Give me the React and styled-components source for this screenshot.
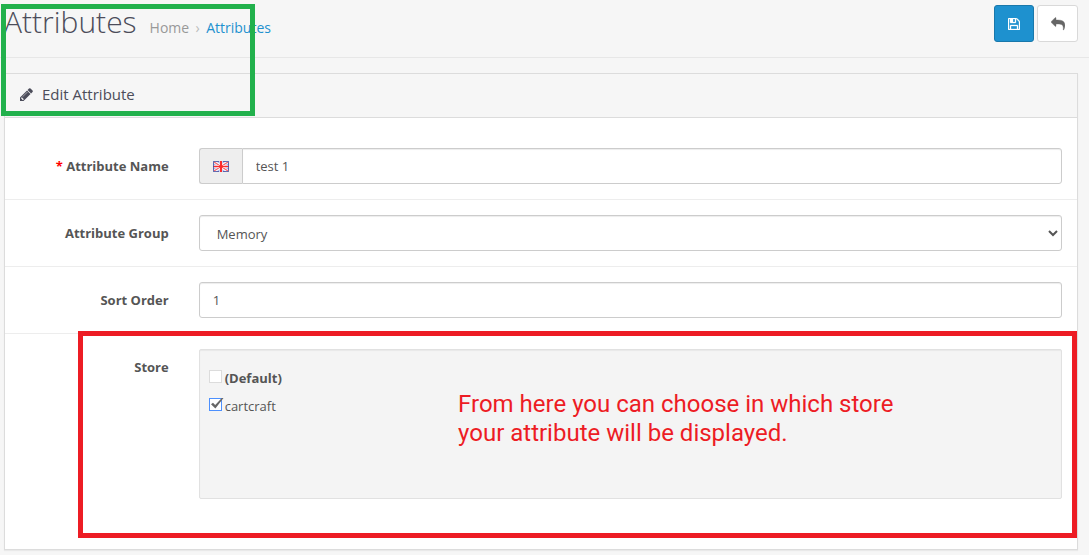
import { useState } from 'react';
import styled, { createGlobalStyle } from 'styled-components';

const BORDER = '#dcdcdc';
const BLUE = '#1e91cf';
const RED = '#ed1c24';
const GREEN = '#22b14c';

function PencilIcon() {
  return (
    <svg width="13" height="13" viewBox="0 0 1536 1536" fill="currentColor" aria-hidden="true">
      <path d="M363 1408l91-91-235-235-91 91v107h128v128h107zm523-928q0-22-22-22-10 0-17 7l-542 542q-7 7-7 17 0 22 22 22 10 0 17-7l542-542q7-7 7-17zm-54-192l416 416-832 832h-416v-416zm683 96q0 53-37 90l-166 166-416-416 166-165q36-38 90-38 53 0 91 38l235 234q37 39 37 91z" />
    </svg>
  );
}

function SaveIcon() {
  return (
    <svg width="12" height="12" viewBox="0 0 1536 1536" fill="currentColor" aria-hidden="true">
      <path
        stroke="currentColor"
        strokeWidth="40"
        d="M384 1408h768v-384h-768v384zm896 0h128v-896q0-14-10-38.500t-20-34.500l-281-281q-10-10-34-20t-39-10v416q0 40-28 68t-68 28h-576q-40 0-68-28t-28-68v-416h-128v1280h128v-416q0-40 28-68t68-28h832q40 0 68 28t28 68v416zm-384-928v-320q0-13-9.500-22.500t-22.500-9.500h-192q-13 0-22.500 9.500t-9.500 22.500v320q0 13 9.500 22.500t22.500 9.500h192q13 0 22.500-9.500t9.500-22.500zm640 32v928q0 40-28 68t-68 28h-1344q-40 0-68-28t-28-68v-1344q0-40 28-68t68-28h928q40 0 88 20t76 48l280 280q28 28 48 76t20 88z"
      />
    </svg>
  );
}

function ReplyIcon() {
  return (
    <svg width="14" height="14" viewBox="0 0 1792 1792" fill="currentColor" aria-hidden="true">
      <path
        transform="translate(1792 0) scale(-1 1)"
        stroke="currentColor"
        strokeWidth="50"
        d="M1792 640q0 26-19 45l-512 512q-19 19-45 19t-45-19-19-45v-256h-224q-98 0-175.500 6t-154 21.500-133 42.500-105.500 69.500-80 101-48.500 138.500-17.500 181q0 55 5 123 0 6 2.500 23.500t2.500 26.500q0 15-8.500 25t-23.500 10q-16 0-28-17-7-9-13-22t-13.500-30-10.500-24q-127-285-127-451 0-199 53-333 162-403 875-403h224v-256q0-26 19-45t45-19 45 19l512 512q19 19 19 45z"
      />
    </svg>
  );
}

function FlagIcon() {
  return (
    <svg width="16" height="11" viewBox="0 0 16 11" role="img" aria-label="English">
      <rect width="16" height="11" fill="#a9b6e8" />
      <path d="M0 0L16 11M16 0L0 11" stroke="#fff" strokeWidth="3" />
      <path d="M1 1L15 10M15 1L1 10" stroke="#f4636b" strokeWidth="1.300" />
      <path d="M8 0V11M0 5.500H16" stroke="#fff" strokeOpacity="0.700" strokeWidth="3" />
      <path d="M8 0V11" stroke="#fb2b2b" strokeWidth="2" />
      <path d="M0 5.500H16" stroke="#fb2b2b" strokeWidth="1.400" />
      <circle cx="8" cy="5.500" r="2" fill="#fb2b2b" />
      <path d="M0.500 0V11M15.500 0V11M1 0.500H6M10 0.500H15M1 10.500H6M10 10.500H15" stroke="#4450a0" strokeOpacity="0.800" />
    </svg>
  );
}

function StoreCheckbox({ id, label, bold, defaultChecked }) {
  const [checked, setChecked] = useState(Boolean(defaultChecked));

  return (
    <CheckLabel htmlFor={id} $bold={bold}>
      <CheckBox>
        <CheckInput
          id={id}
          type="checkbox"
          checked={checked}
          onChange={(e) => setChecked(e.target.checked)}
        />
        {checked && (
          <CheckMark width="15" height="13" viewBox="0 0 15 13" aria-hidden="true">
            <path d="M2 6.200L4 4.800L6.200 7L12.800 0H14.500L6.400 10.600Z" fill="#666" />
          </CheckMark>
        )}
      </CheckBox>
      {label}
    </CheckLabel>
  );
}

function App() {
  return (
    <Page>
      <GlobalStyle />
      <PageHeader>
        <Title>Attributes</Title>
        <Breadcrumb aria-label="Breadcrumb">
          <Crumb href="#home">Home</Crumb>
          <Separator>›</Separator>
          <Crumb href="#attributes" $active>
            Attributes
          </Crumb>
        </Breadcrumb>
        <Actions>
          <ActionButton type="submit" form="form-attribute" $primary aria-label="Save">
            <SaveIcon />
          </ActionButton>
          <ActionButton type="button" aria-label="Cancel">
            <ReplyIcon />
          </ActionButton>
        </Actions>
      </PageHeader>

      <Panel>
        <PanelHeading>
          <PencilIcon />
          <PanelTitle>Edit Attribute</PanelTitle>
        </PanelHeading>
        <Form id="form-attribute" onSubmit={(e) => e.preventDefault()}>
          <FormRow>
            <Label htmlFor="name">
              <Required>*</Required> Attribute Name
            </Label>
            <Field>
              <Addon>
                <FlagIcon />
              </Addon>
              <Input id="name" type="text" defaultValue="test 1" $grouped />
            </Field>
          </FormRow>
          <FormRow>
            <Label htmlFor="group">Attribute Group</Label>
            <Field>
              <Select id="group" defaultValue="memory">
                <option value="memory">Memory</option>
              </Select>
            </Field>
          </FormRow>
          <FormRow>
            <Label htmlFor="sort-order">Sort Order</Label>
            <Field>
              <Input id="sort-order" type="text" defaultValue="1" />
            </Field>
          </FormRow>
          <FormRow>
            <Label as="span" id="store-label">
              Store
            </Label>
            <Field>
              <Well role="group" aria-labelledby="store-label">
                <StoreCheckbox id="store-0" label="(Default)" bold />
                <StoreCheckbox id="store-1" label="cartcraft" defaultChecked />
                <Note>
                  From here you can choose in which store
                  <br />
                  your attribute will be displayed.
                </Note>
              </Well>
            </Field>
            <StoreFrame />
          </FormRow>
        </Form>
      </Panel>
      <HeaderFrame />
    </Page>
  );
}

export default App;

const GlobalStyle = createGlobalStyle`
  * {
    box-sizing: border-box;
  }
  body {
    margin: 0;
    background-color: #f6f6f6;
    color: #555;
    font-family: 'Open Sans', sans-serif;
    font-size: 13px;
    line-height: 20px;
  }
  input, select, button {
    font: inherit;
    color: inherit;
  }
`;
const Page = styled.div`
  position: relative;
  min-height: 100vh;
`;
const PageHeader = styled.header`
  display: flex;
  align-items: flex-start;
  height: 58px;
  padding: 5px 11px 0 4px;
  border-bottom: 1px solid #e7e7e7;
`;
const Title = styled.h1`
  margin: 0;
  color: #4c4d5a;
  font-size: 30px;
  font-weight: 300;
  line-height: 34px;
`;
const Breadcrumb = styled.nav`
  display: flex;
  margin: 13px 0 0 13px;
  font-size: 14px;
`;
const Crumb = styled.a`
  color: ${({ $active }) => ($active ? BLUE : '#999')};
  text-decoration: none;
`;
const Separator = styled.span`
  width: 17px;
  color: #bbb;
  text-align: center;
`;
const Actions = styled.div`
  display: flex;
  gap: 3px;
  margin-left: auto;
`;
const ActionButton = styled.button`
  display: flex;
  align-items: center;
  justify-content: center;
  width: ${({ $primary }) => ($primary ? '40px' : '41px')};
  height: 37px;
  padding: 0;
  border: 1px solid ${({ $primary }) => ($primary ? '#1978ab' : '#d9d9d9')};
  border-radius: 3px;
  background-color: ${({ $primary }) => ($primary ? BLUE : '#fff')};
  color: ${({ $primary }) => ($primary ? '#fff' : '#666')};
  cursor: pointer;
`;
const Panel = styled.section`
  margin: 15px 11px 0 4px;
  border: 1px solid ${BORDER};
  box-shadow: 0 1px 1px rgba(0, 0, 0, 0.05);
  background-color: #fff;
`;
const PanelHeading = styled.div`
  display: flex;
  align-items: center;
  gap: 9px;
  height: 44px;
  padding: 0 15px 3px;
  border-bottom: 1px solid ${BORDER};
  background-color: #f6f6f6;
  color: #4c4d5a;
`;
const PanelTitle = styled.h2`
  margin: 0;
  font-size: 15px;
  font-weight: 400;
`;
const Form = styled.form`
  padding: 15px 0 20px;
`;
const FormRow = styled.div`
  position: relative;
  display: grid;
  grid-template-columns: 1fr 5fr;
  padding: 15px 0;

  & + & {
    border-top: 1px solid #ededed;
  }
  &:last-child {
    padding-bottom: 30px;
  }
`;
const Label = styled.label`
  padding: 8px 15px 0;
  font-weight: 700;
  text-align: right;
  white-space: nowrap;
`;
const Required = styled.span`
  color: #f00;
`;
const Field = styled.div`
  display: flex;
  min-width: 0;
  padding: 0 15px;
`;
const Addon = styled.span`
  display: flex;
  align-items: center;
  justify-content: center;
  width: 43px;
  border: 1px solid #ccc;
  border-right: 0;
  border-radius: 3px 0 0 3px;
  background-color: #eee;
`;
const Input = styled.input`
  flex: 1;
  min-width: 0;
  height: 36px;
  padding: 8px 13px;
  border: 1px solid #ccc;
  border-radius: ${({ $grouped }) => ($grouped ? '0 3px 3px 0' : '3px')};
  box-shadow: inset 0 1px 1px rgba(0, 0, 0, 0.075);
  background-color: #fff;
`;
const Select = styled.select`
  flex: 1;
  min-width: 0;
  height: 36px;
  padding: 2px 0 0 13px;
  border: 1px solid #ccc;
  border-radius: 3px;
  box-shadow: inset 0 1px 1px rgba(0, 0, 0, 0.075);
  background-color: #fff;
`;
const Well = styled.div`
  position: relative;
  flex: 1;
  height: 150px;
  padding: 14px 9px;
  border: 1px solid #e1e1e1;
  border-radius: 2px;
  box-shadow: inset 0 1px 1px rgba(0, 0, 0, 0.05);
  background-color: #f4f4f4;
`;
const CheckLabel = styled.label`
  display: flex;
  align-items: center;
  gap: 3px;
  height: 28px;
  font-weight: ${({ $bold }) => ($bold ? 700 : 400)};
`;
const CheckBox = styled.span`
  position: relative;
  display: flex;
  margin-bottom: 3px;
`;
const CheckInput = styled.input`
  appearance: none;
  width: 13px;
  height: 13px;
  margin: 0;
  border: 1px solid #dcdcdc;
  background-color: #fff;

  &:checked {
    border-color: #4d90fe;
  }
`;
const CheckMark = styled.svg`
  position: absolute;
  top: 0;
  left: 0;
  pointer-events: none;
`;
// Callouts drawn over the form
const Note = styled.p`
  position: absolute;
  top: 40px;
  left: 30%;
  margin: 0;
  color: ${RED};
  font-family: Roboto, sans-serif;
  font-size: 24px;
  line-height: 29px;
  white-space: nowrap;
`;
const StoreFrame = styled.div`
  position: absolute;
  top: -3px;
  right: 0;
  bottom: -9px;
  left: 73px;
  border: 5px solid ${RED};
  pointer-events: none;
`;
const HeaderFrame = styled.div`
  position: absolute;
  top: 4px;
  left: 1px;
  width: 254px;
  height: 112px;
  border: 5px solid ${GREEN};
  pointer-events: none;
`;
